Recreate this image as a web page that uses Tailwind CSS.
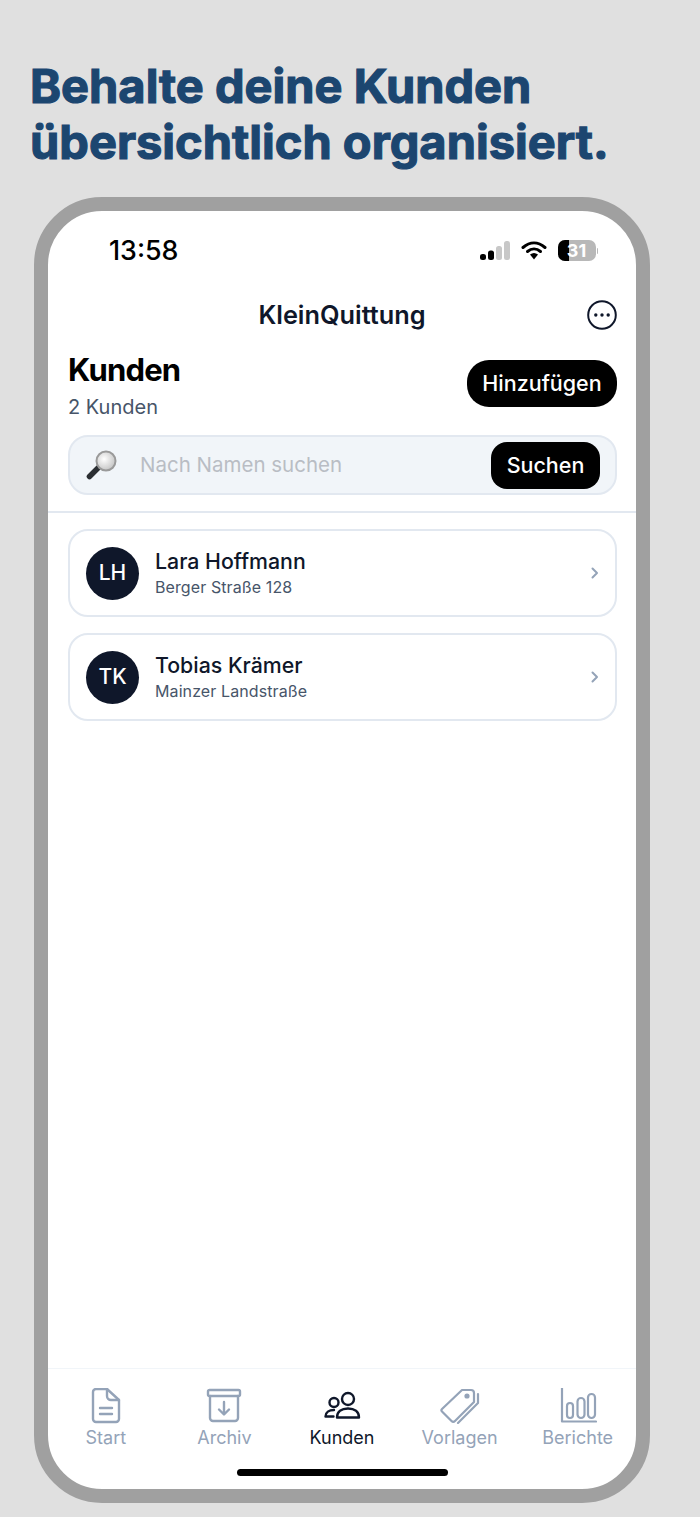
<!DOCTYPE html>
<html lang="de">
  <head>
    <meta charset="UTF-8" />
    <meta name="viewport" content="width=device-width, initial-scale=1.0" />
    <title>KleinQuittung</title>
    <script src="https://cdn.jsdelivr.net/npm/@tailwindcss/browser@4"></script>
  </head>
  <body class="bg-[#e0e0e0] font-[Inter,sans-serif] w-[700px] h-[1517px] overflow-hidden">
    <h1 class="pt-[58px] pl-[30px] h-[197px] text-[47px] leading-[56px] font-bold tracking-[0px] text-[#1c4670] [-webkit-text-stroke:1.2px_#1c4670] whitespace-nowrap">
      Behalte deine Kunden<br />übersichtlich organisiert.
    </h1>

    <div class="ml-[34px] w-[616px] h-[1306px] border-[14px] border-[#a0a0a0] rounded-[68px] bg-white flex flex-col overflow-hidden">
      <!-- Statusleiste -->
      <div class="h-[79px] shrink-0 flex items-center justify-between pl-[61px] pr-[38px]">
        <span class="text-[26.8px] font-medium text-black">13:58</span>
        <div class="flex items-center">
          <svg width="30" height="20" viewBox="0 0 30 20">
            <rect x="0" y="13" width="6" height="6" rx="2.5" fill="#000" />
            <rect x="8" y="9.5" width="6" height="9.5" rx="2.5" fill="#000" />
            <rect x="16" y="5" width="6" height="14" rx="2.5" fill="#c8c8c8" />
            <rect x="24" y="0" width="6" height="19" rx="2.5" fill="#c8c8c8" />
          </svg>
          <svg class="ml-[11px]" width="26" height="19" viewBox="0 0 26 19">
            <path d="M2 6.500C9 .5 17 .5 24 6.500" fill="none" stroke="#000" stroke-width="3" stroke-linecap="round" />
            <path d="M6.500 10.500c4-3.300 9-3.300 13 0" fill="none" stroke="#000" stroke-width="3" stroke-linecap="round" />
            <path d="M9 13.600c2.600-2 5.400-2 8 0L13 18.500z" fill="#000" />
          </svg>
          <div class="ml-[11px] relative w-[38px] h-[21px] rounded-[7px] bg-[#b8b8b8] overflow-hidden flex items-center justify-center text-white text-[18px] font-bold">
            <div class="absolute left-0 top-0 bottom-0 w-[11px] bg-black"></div>
            <span class="relative">31</span>
          </div>
          <div class="ml-[1px] w-[1.5px] h-[6px] rounded-r-full bg-[#b8b8b8]"></div>
        </div>
      </div>

      <!-- Titel -->
      <div class="relative h-[50px] shrink-0 flex items-center justify-center">
        <span class="text-[25.3px] leading-none font-semibold text-[#0f172a]">KleinQuittung</span>
        <svg class="absolute right-[19px] top-[10px]" width="30" height="30" viewBox="0 0 30 30">
          <circle cx="15" cy="15" r="13.800" fill="none" stroke="#0f172a" stroke-width="2" />
          <circle cx="8.800" cy="15" r="1.700" fill="#0f172a" />
          <circle cx="15" cy="15" r="1.700" fill="#0f172a" />
          <circle cx="21.200" cy="15" r="1.700" fill="#0f172a" />
        </svg>
      </div>

      <!-- Kopf -->
      <div class="h-[81px] mt-[11px] shrink-0 flex justify-between items-start pl-[20px] pr-[19px]">
        <div>
          <div class="text-[31px] leading-[38px] font-bold tracking-[-0.8px] text-black">Kunden</div>
          <div class="text-[20px] leading-[28px] mt-[4px] text-[#475569]">2 Kunden</div>
        </div>
        <button class="mt-[9px] w-[150px] h-[47px] rounded-[22px] bg-black text-white text-[21.500px] font-medium">Hinzufügen</button>
      </div>

      <!-- Suche -->
      <div class="mt-[3px] ml-[20px] mr-[19px] h-[60px] shrink-0 rounded-[20px] bg-[#f1f5f9] border-2 border-[#e2e8f0] flex items-center pl-[16px] pr-[15px]">
        <svg width="32" height="32" viewBox="0 0 32 32">
          <defs>
            <radialGradient id="lens" cx="0.4" cy="0.4" r="0.7">
              <stop offset="0" stop-color="#ffffff" />
              <stop offset="1" stop-color="#bdbdbd" />
            </radialGradient>
          </defs>
          <path d="M12 19 3.500 27.500" stroke="#2b2f33" stroke-width="5.500" stroke-linecap="round" />
          <circle cx="20" cy="12" r="9.500" fill="url(#lens)" stroke="#9a9a9a" stroke-width="2" />
        </svg>
        <span class="ml-[22px] text-[20.500px] text-[#b9bdc4]">Nach Namen suchen</span>
        <button class="ml-auto w-[109px] h-[47px] rounded-[16px] bg-black text-white text-[21.500px] font-medium">Suchen</button>
      </div>

      <div class="mt-[16px] h-[2px] shrink-0 bg-[#e2e8f0]"></div>

      <!-- Kundenliste -->
      <div class="flex-1 pl-[20px] pr-[19px] pt-[16px] flex flex-col gap-[16px]">
        <div class="h-[88px] rounded-[20px] border-2 border-[#e2e8f0] flex items-center pl-[16px] pr-[15px]">
          <div class="w-[53px] h-[53px] rounded-full bg-[#0f172a] text-white flex items-center justify-center text-[21px] font-medium">LH</div>
          <div class="ml-[16px]">
            <div class="text-[21.300px] leading-[28px] font-medium text-[#0f172a]">Lara Hoffmann</div>
            <div class="text-[16px] leading-[24px] tracking-[0.1px] text-[#475569]">Berger Straße 128</div>
          </div>
          <svg class="ml-auto" width="10" height="16" viewBox="0 0 10 16"><path d="M2.500 3.500 7 8l-4.500 4.500" fill="none" stroke="#94a3b8" stroke-width="2" stroke-linecap="round" stroke-linejoin="round" /></svg>
        </div>
        <div class="h-[88px] rounded-[20px] border-2 border-[#e2e8f0] flex items-center pl-[16px] pr-[15px]">
          <div class="w-[53px] h-[53px] rounded-full bg-[#0f172a] text-white flex items-center justify-center text-[21px] font-medium">TK</div>
          <div class="ml-[16px]">
            <div class="text-[21.300px] leading-[28px] font-medium text-[#0f172a]">Tobias Krämer</div>
            <div class="text-[16px] leading-[24px] tracking-[0.1px] text-[#475569]">Mainzer Landstraße</div>
          </div>
          <svg class="ml-auto" width="10" height="16" viewBox="0 0 10 16"><path d="M2.500 3.500 7 8l-4.500 4.500" fill="none" stroke="#94a3b8" stroke-width="2" stroke-linecap="round" stroke-linejoin="round" /></svg>
        </div>
      </div>

      <!-- Tabbar -->
      <div class="h-[121px] shrink-0 border-t border-[#f1f5f9] flex flex-col">
        <div class="grid grid-cols-5 pt-[19px]">
          <div class="flex flex-col items-center text-[18px] leading-[24px] text-[#94a3b8]">
            <svg class="-ml-[2px]" width="38" height="36" viewBox="0 0 38 36" fill="none" stroke="#94a3b8" stroke-width="2.400" stroke-linecap="round" stroke-linejoin="round">
              <path d="M10 1h10l12 11v19a3 3 0 0 1-3 3H9a3 3 0 0 1-3-3V4a3 3 0 0 1 3-3z" />
              <path d="M20 1v7a4 4 0 0 0 4 4h8" />
              <path d="M13 20h12M13 26h12" />
            </svg>
            <span class="mt-[2px] -ml-[2px]">Start</span>
          </div>
          <div class="flex flex-col items-center text-[18px] leading-[24px] text-[#94a3b8]">
            <svg width="38" height="36" viewBox="0 0 38 36" fill="none" stroke="#94a3b8" stroke-width="2.400" stroke-linecap="round" stroke-linejoin="round">
              <rect x="3" y="2" width="32" height="6" rx="1.500" />
              <path d="M5 8v22a3 3 0 0 0 3 3h22a3 3 0 0 0 3-3V8" />
              <path d="M19 14v12M14 21.500l5 5 5-5" />
            </svg>
            <span class="mt-[2px]">Archiv</span>
          </div>
          <div class="flex flex-col items-center text-[18px] leading-[24px] text-[#0f172a]">
            <svg width="38" height="36" viewBox="0 0 38 36" fill="none" stroke="#0f172a" stroke-width="2.400" stroke-linecap="round" stroke-linejoin="round">
              <circle cx="11" cy="14.500" r="4.500" />
              <circle cx="25" cy="11" r="6" />
              <path d="M2.500 28.500c0-4 3.500-6.500 8.500-6.500M2.500 28.500h8" />
              <path d="M14 29.500c0-6 4.500-9 11-9s11 3 11 9z" />
            </svg>
            <span class="mt-[2px]">Kunden</span>
          </div>
          <div class="flex flex-col items-center text-[18px] leading-[24px] text-[#94a3b8]">
            <svg class="ml-[1px]" width="40" height="36" viewBox="0 0 40 36" fill="none" stroke="#94a3b8" stroke-width="2.200" stroke-linecap="round" stroke-linejoin="round">
              <path d="M2 21 22 2h9a3 3 0 0 1 3 3v9L15 33a2.500 2.500 0 0 1-3.500 0L2 23.500a1.800 1.800 0 0 1 0-2.500z" />
              <path d="M38 6v9L18 35" />
              <circle cx="27" cy="8" r="1.500" fill="#94a3b8" />
            </svg>
            <span class="mt-[2px]">Vorlagen</span>
          </div>
          <div class="flex flex-col items-center text-[18px] leading-[24px] text-[#94a3b8]">
            <svg width="40" height="36" viewBox="0 0 40 36" fill="none" stroke="#94a3b8" stroke-width="2.200" stroke-linecap="round" stroke-linejoin="round">
              <path d="M5 0v33.500h34" />
              <rect x="10" y="15" width="6" height="15" rx="3" />
              <rect x="20.500" y="10" width="7" height="20" rx="3.500" />
              <rect x="31" y="6" width="7" height="24" rx="3.500" />
            </svg>
            <span class="mt-[2px] ml-[1px]">Berichte</span>
          </div>
        </div>
        <div class="mt-[19px] mx-auto w-[211px] h-[7px] rounded-full bg-black"></div>
      </div>
    </div>
  </body>
</html>
